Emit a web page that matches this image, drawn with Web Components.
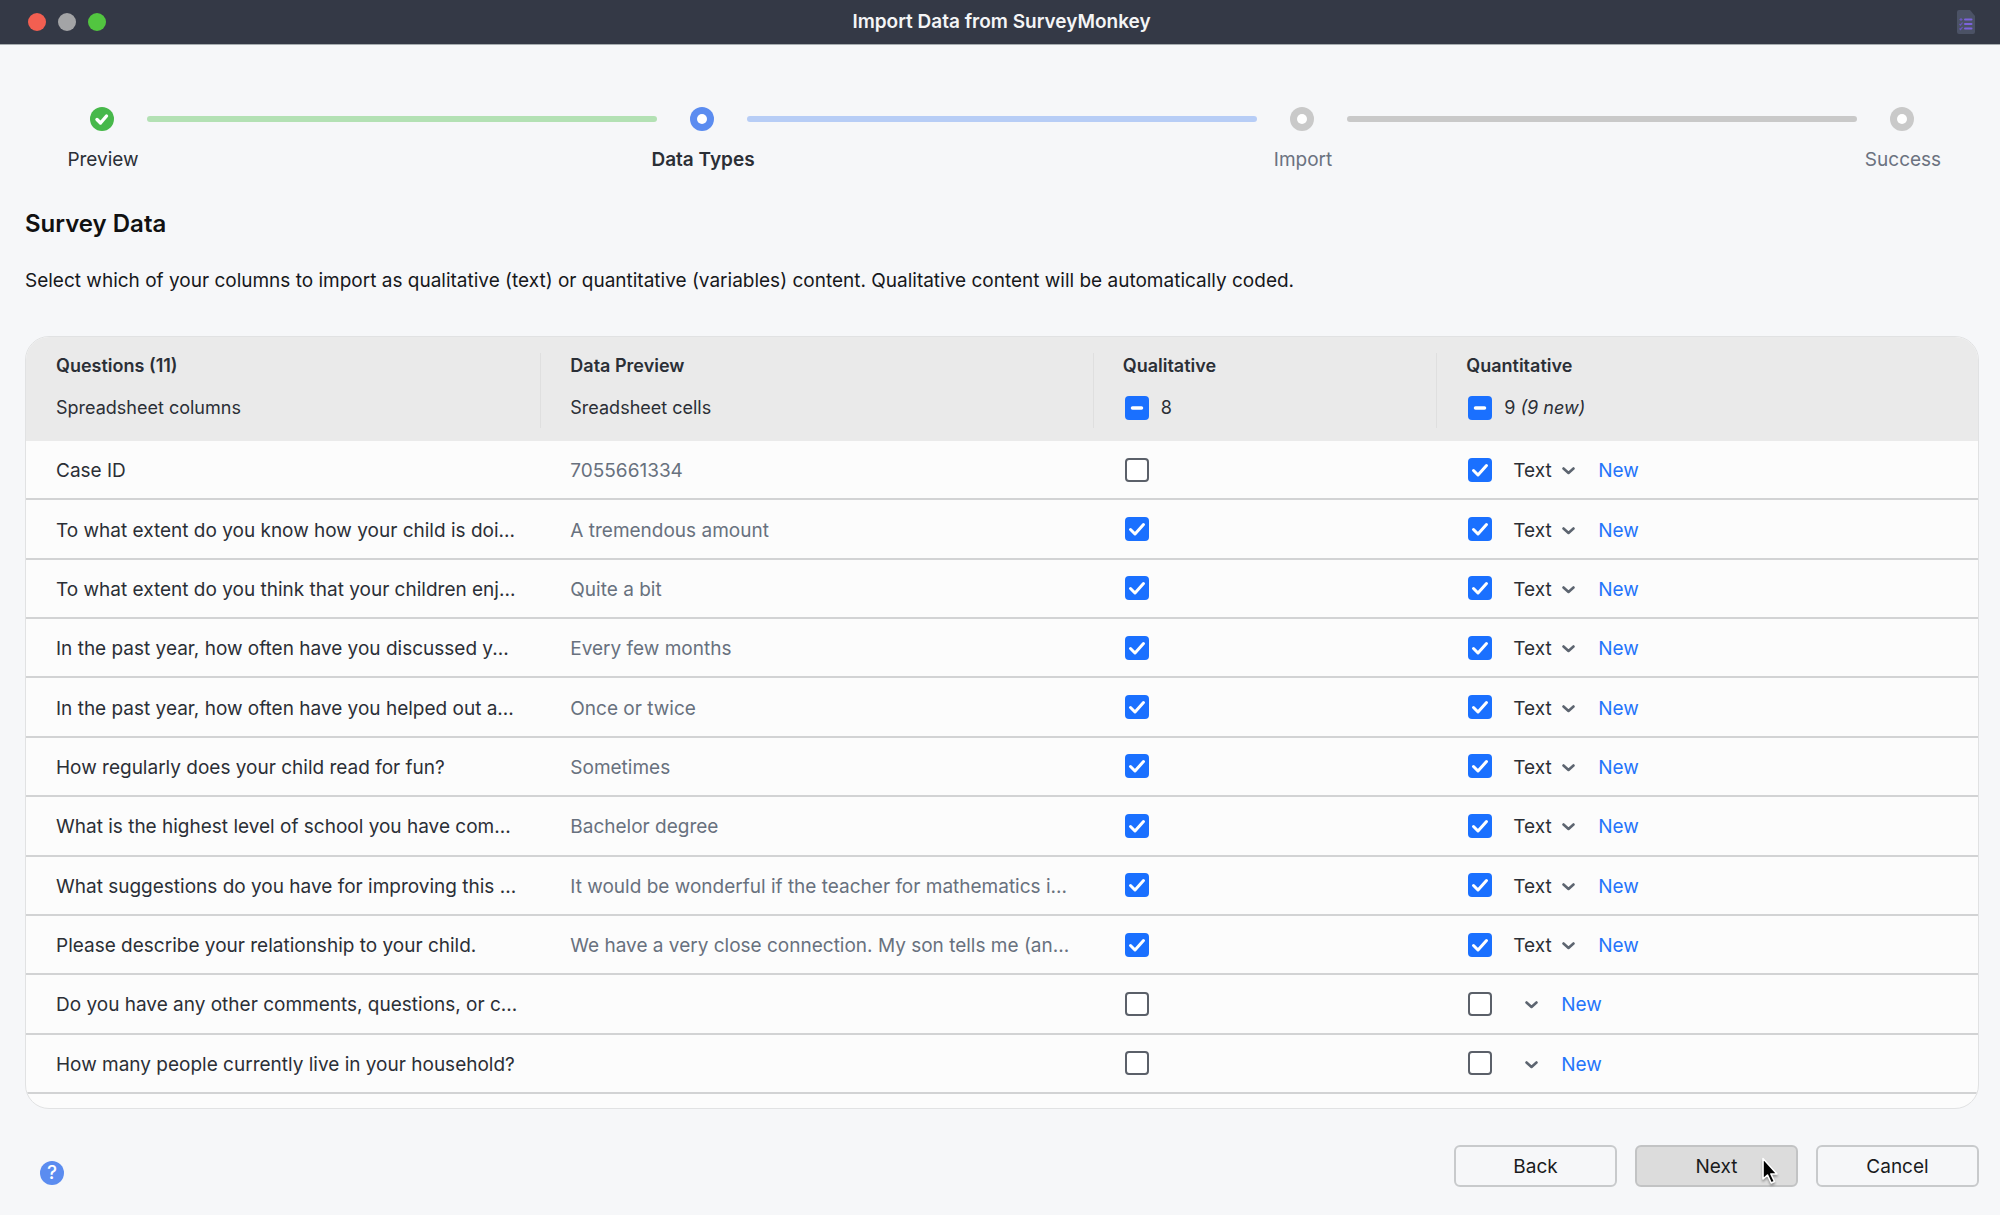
<!DOCTYPE html>
<html lang="en">
<head>
<meta charset="utf-8">
<title>Import Data from SurveyMonkey</title>
<style>
  html, body { margin: 0; height: 100%; }
  body { font-family: Inter, "Liberation Sans", sans-serif; font-size: 19px; line-height: 24px; color: #2b2f36; background: #f6f7f9; }
</style>
</head>
<body>
<import-dialog></import-dialog>

<template id="t-import-dialog">
  <style>
    :host { display: flex; flex-direction: column; min-height: 100vh; }
    main { flex: 1; display: flex; flex-direction: column; padding: 62px 21px 28px 25px; }
    h1 { margin: 37px 0 0; font-size: 24px; line-height: 30px; font-weight: 600; color: #111; }
    p { margin: 30px 0 43px; color: #16181b; }
    data-table { flex: 1; }
    footer { display: flex; gap: 18px; margin-top: 36px; align-items: center; }
    help-button { margin: 14px auto 0 15px; }
  </style>
  <title-bar>Import Data from SurveyMonkey</title-bar>
  <main>
    <step-progress>
      <step-item state="done">Preview</step-item>
      <step-line state="done"></step-line>
      <step-item state="current">Data Types</step-item>
      <step-line state="current"></step-line>
      <step-item>Import</step-item>
      <step-line></step-line>
      <step-item>Success</step-item>
    </step-progress>
    <h1>Survey Data</h1>
    <p>Select which of your columns to import as qualitative (text) or quantitative (variables) content. Qualitative content will be automatically coded.</p>
    <data-table></data-table>
    <footer>
      <help-button></help-button>
      <push-button>Back</push-button>
      <push-button pressed>Next</push-button>
      <push-button>Cancel</push-button>
    </footer>
  </main>
</template>

<template id="t-title-bar">
  <style>
    :host { display: grid; grid-template-columns: 1fr auto 1fr; align-items: center; height: 44px; padding: 0 25px 0 28px; background: #343946; border-bottom: 1px solid #a7adb0; color: #f4f5f6; font-weight: 600; }
    .lights { display: flex; gap: 12px; }
    .lights button { width: 18px; height: 18px; padding: 0; border: 0; border-radius: 50%; background: #a3a4a6; }
    .lights .close { background: #f25f51; }
    .lights .zoom { background: #52c540; }
    svg { justify-self: end; }
  </style>
  <div class="lights">
    <button class="close" aria-label="Close"></button>
    <button aria-label="Minimize"></button>
    <button class="zoom" aria-label="Zoom"></button>
  </div>
  <div><slot></slot></div>
  <svg width="18" height="24" viewBox="0 0 18 24">
    <path d="M2 0h11l5 6v16a2 2 0 0 1-2 2H2a2 2 0 0 1-2-2V2a2 2 0 0 1 2-2z" fill="#4b5265"/>
    <path d="M8 9.5h6.500M8 14h6.500M8 18.500h6.500" stroke="#7c63dc" stroke-width="2" stroke-linecap="round"/>
    <path d="M2.500 9.500h3M4 8v3M2.500 14l1 1 2-2.500M2.500 18.500l1 1 2-2.500" stroke="#6a57bd" stroke-width="1.200" fill="none"/>
  </svg>
</template>

<template id="t-step-progress">
  <style>
    :host { display: flex; align-items: flex-start; gap: 33px; padding: 0 65px; }
  </style>
  <slot></slot>
</template>

<template id="t-step-item">
  <style>
    :host { display: flex; flex-direction: column; align-items: center; gap: 17px; width: 24px; white-space: nowrap; color: #6b7280; --dot: #c9c9c9; }
    :host([state="done"]) { color: #2b2f36; --dot: #47b84b; }
    :host([state="current"]) { color: #2b2f36; font-weight: 600; --dot: #5b8cf0; }
    svg { display: block; }
    span { padding-left: 2px; }
    .tick { display: none; }
    :host([state="done"]) .tick { display: block; }
    :host([state="done"]) .ring { display: none; }
  </style>
  <svg width="24" height="24" viewBox="0 0 24 24">
    <circle cx="12" cy="12" r="12" fill="var(--dot)"/>
    <circle class="ring" cx="12" cy="12" r="5" fill="#fff"/>
    <path class="tick" d="M7 12.500l3.500 3.500 6-7" fill="none" stroke="#fff" stroke-width="3.400" stroke-linecap="round" stroke-linejoin="round"/>
  </svg>
  <span><slot></slot></span>
</template>

<template id="t-step-line">
  <style>
    :host { display: block; flex: 1; height: 6px; margin-top: 9px; border-radius: 3px; background: #c9c9c9; }
    :host([state="done"]) { background: #b3e1b4; }
    :host([state="current"]) { background: #b7cdf6; }
  </style>
</template>

<template id="t-check-box">
  <style>
    :host { display: inline-grid; vertical-align: middle; }
    input, svg { grid-area: 1 / 1; }
    input { appearance: none; box-sizing: border-box; width: 24px; height: 24px; margin: 0; border: 2px solid #5b6069; border-radius: 4px; background: #fff; }
    input:checked, input:indeterminate { border: 0; background: #1a70ff; }
    svg { pointer-events: none; visibility: hidden; }
    input:checked ~ .tick, input:indeterminate ~ .dash { visibility: visible; }
  </style>
  <input type="checkbox">
  <svg class="tick" width="24" height="24" viewBox="0 0 24 24"><path d="M5.500 12.500l4.500 4.500L18.500 7.500" fill="none" stroke="#fff" stroke-width="3" stroke-linecap="round" stroke-linejoin="round"/></svg>
  <svg class="dash" width="24" height="24" viewBox="0 0 24 24"><path d="M7.500 12h9" stroke="#fff" stroke-width="3.500" stroke-linecap="round"/></svg>
</template>

<template id="t-type-select">
  <style>
    :host { display: inline-grid; align-items: center; width: 25px; }
    :host([value]) { width: 62px; }
    select, svg { grid-area: 1 / 1; }
    select { appearance: none; width: 100%; padding: 0; border: 0; background: none; font: inherit; color: inherit; }
    svg { justify-self: end; pointer-events: none; }
  </style>
  <select aria-label="Variable type"><option></option></select>
  <svg width="13" height="8" viewBox="0 0 13 8"><path d="M1.500 1.500l5 4.500 5-4.500" fill="none" stroke="#5d6570" stroke-width="2.600" stroke-linecap="round" stroke-linejoin="round"/></svg>
</template>

<template id="t-data-table">
  <style>
    :host { display: grid; box-sizing: border-box; padding-bottom: 14px; overflow: hidden; border: 1px solid #e1e2e3; border-radius: 24px; background: #fcfcfc; }
    table { width: 100%; height: 100%; border-collapse: separate; border-spacing: 0; table-layout: fixed; }
    th, td { padding: 0 0 0 29px; text-align: left; font-weight: 400; white-space: nowrap; }
    th:first-child { padding-left: 30px; }
    thead th { height: 104px; background: #eaeaea; font-size: 18px; vertical-align: top; }
    .head { display: flex; flex-direction: column; gap: 17px; height: 75px; margin-top: 16px; box-sizing: border-box; border-right: 1px solid #dfdfdf; }
    th:last-child .head { border: 0; }
    .head b { font-weight: 600; margin-top: 1px; }
    .head label { display: flex; align-items: center; gap: 12px; padding-left: 2px; }
    .head span { padding-top: 1px; }
    tbody th, tbody td { border-bottom: 2px solid #d2d3d4; }
    tbody th, .preview { padding-top: 3px; }
    .preview { color: #68717e; }
    .qual { padding-left: 31px; }
    .qual check-box { display: grid; }
    .quant { display: flex; align-items: center; padding-left: 2px; }
    type-select { margin: 0 23px 0 21px; }
    type-select, a { padding-top: 3px; }
    a { color: #2474fa; text-decoration: none; }
    col:nth-child(1) { width: 26.4%; }
    col:nth-child(2) { width: 28.3%; }
    col:nth-child(3) { width: 17.6%; }
  </style>
  <table>
    <colgroup><col><col><col><col></colgroup>
    <thead>
      <tr>
        <th><div class="head"><b>Questions (11)</b><span>Spreadsheet columns</span></div></th>
        <th><div class="head"><b>Data Preview</b><span>Sreadsheet cells</span></div></th>
        <th><div class="head"><b>Qualitative</b><label><check-box mixed label="All qualitative"></check-box><span>8</span></label></div></th>
        <th><div class="head"><b>Quantitative</b><label><check-box mixed label="All quantitative"></check-box><span>9 <i>(9 new)</i></span></label></div></th>
      </tr>
    </thead>
    <tbody></tbody>
  </table>
</template>

<template id="t-help-button">
  <style>
    :host { display: block; }
    button { display: block; width: 24px; height: 24px; padding: 0; border: 0; border-radius: 50%; background: #5b8cf0; color: #fff; font: inherit; font-size: 19px; line-height: 24px; font-weight: 500; }
  </style>
  <button aria-label="Help">?</button>
</template>

<template id="t-push-button">
  <style>
    :host { display: block; position: relative; }
    button { display: block; box-sizing: border-box; min-width: 163px; height: 42px; padding: 1px 16px 0; border: 2px solid #c8cacc; border-radius: 6px; background: #f6f7f9; font: inherit; color: #1a1b1d; }
    :host([pressed]) button { background: #dcdcdc; border-color: #c2c3c4; }
    svg { display: none; position: absolute; left: 126px; top: 12px; pointer-events: none; filter: drop-shadow(0 2px 1px #0005); }
    :host([pressed]) svg { display: block; }
  </style>
  <button><slot></slot></button>
  <svg width="18" height="28" viewBox="0 0 18 28"><path d="M2 1.500v20.500l4.500-4 3.700 8 3.300-1.500-3.600-7.500H16z" fill="#000" stroke="#fff" stroke-width="1.600" stroke-linejoin="round"/></svg>
</template>

<script>
  class TemplateElement extends HTMLElement {
    constructor() {
      super();
      const template = document.getElementById('t-' + this.localName);
      this.attachShadow({ mode: 'open' }).append(template.content.cloneNode(true));
    }
  }

  class CheckBox extends TemplateElement {
    connectedCallback() {
      const input = this.shadowRoot.querySelector('input');
      input.checked = this.hasAttribute('checked');
      input.indeterminate = this.hasAttribute('mixed');
      input.setAttribute('aria-label', this.getAttribute('label'));
    }
  }

  class TypeSelect extends TemplateElement {
    connectedCallback() {
      this.shadowRoot.querySelector('option').textContent = this.getAttribute('value') || '';
    }
  }

  // question, preview, imported as text, imported as variable
  const QUESTIONS = [
    ['Case ID', '7055661334', false, true],
    ['To what extent do you know how your child is doi...', 'A tremendous amount', true, true],
    ['To what extent do you think that your children enj...', 'Quite a bit', true, true],
    ['In the past year, how often have you discussed y...', 'Every few months', true, true],
    ['In the past year, how often have you helped out a...', 'Once or twice', true, true],
    ['How regularly does your child read for fun?', 'Sometimes', true, true],
    ['What is the highest level of school you have com...', 'Bachelor degree', true, true],
    ['What suggestions do you have for improving this ...', 'It would be wonderful if the teacher for mathematics i...', true, true],
    ['Please describe your relationship to your child.', 'We have a very close connection. My son tells me (an...', true, true],
    ['Do you have any other comments, questions, or c...', '', false, false],
    ['How many people currently live in your household?', '', false, false]
  ];

  class DataTable extends TemplateElement {
    connectedCallback() {
      this.shadowRoot.querySelector('tbody').innerHTML = QUESTIONS.map(([question, preview, text, variable]) => `
        <tr>
          <th scope="row">${question}</th>
          <td class="preview">${preview}</td>
          <td class="qual"><check-box label="Qualitative" ${text ? 'checked' : ''}></check-box></td>
          <td><div class="quant"><check-box label="Quantitative" ${variable ? 'checked' : ''}></check-box><type-select ${variable ? 'value="Text"' : ''}></type-select><a href="#">New</a></div></td>
        </tr>`).join('');
    }
  }

  customElements.define('check-box', CheckBox);
  customElements.define('type-select', TypeSelect);
  customElements.define('data-table', DataTable);
  for (const name of ['title-bar', 'step-item', 'step-line', 'step-progress', 'help-button', 'push-button', 'import-dialog']) {
    customElements.define(name, class extends TemplateElement {});
  }
</script>
</body>
</html>
